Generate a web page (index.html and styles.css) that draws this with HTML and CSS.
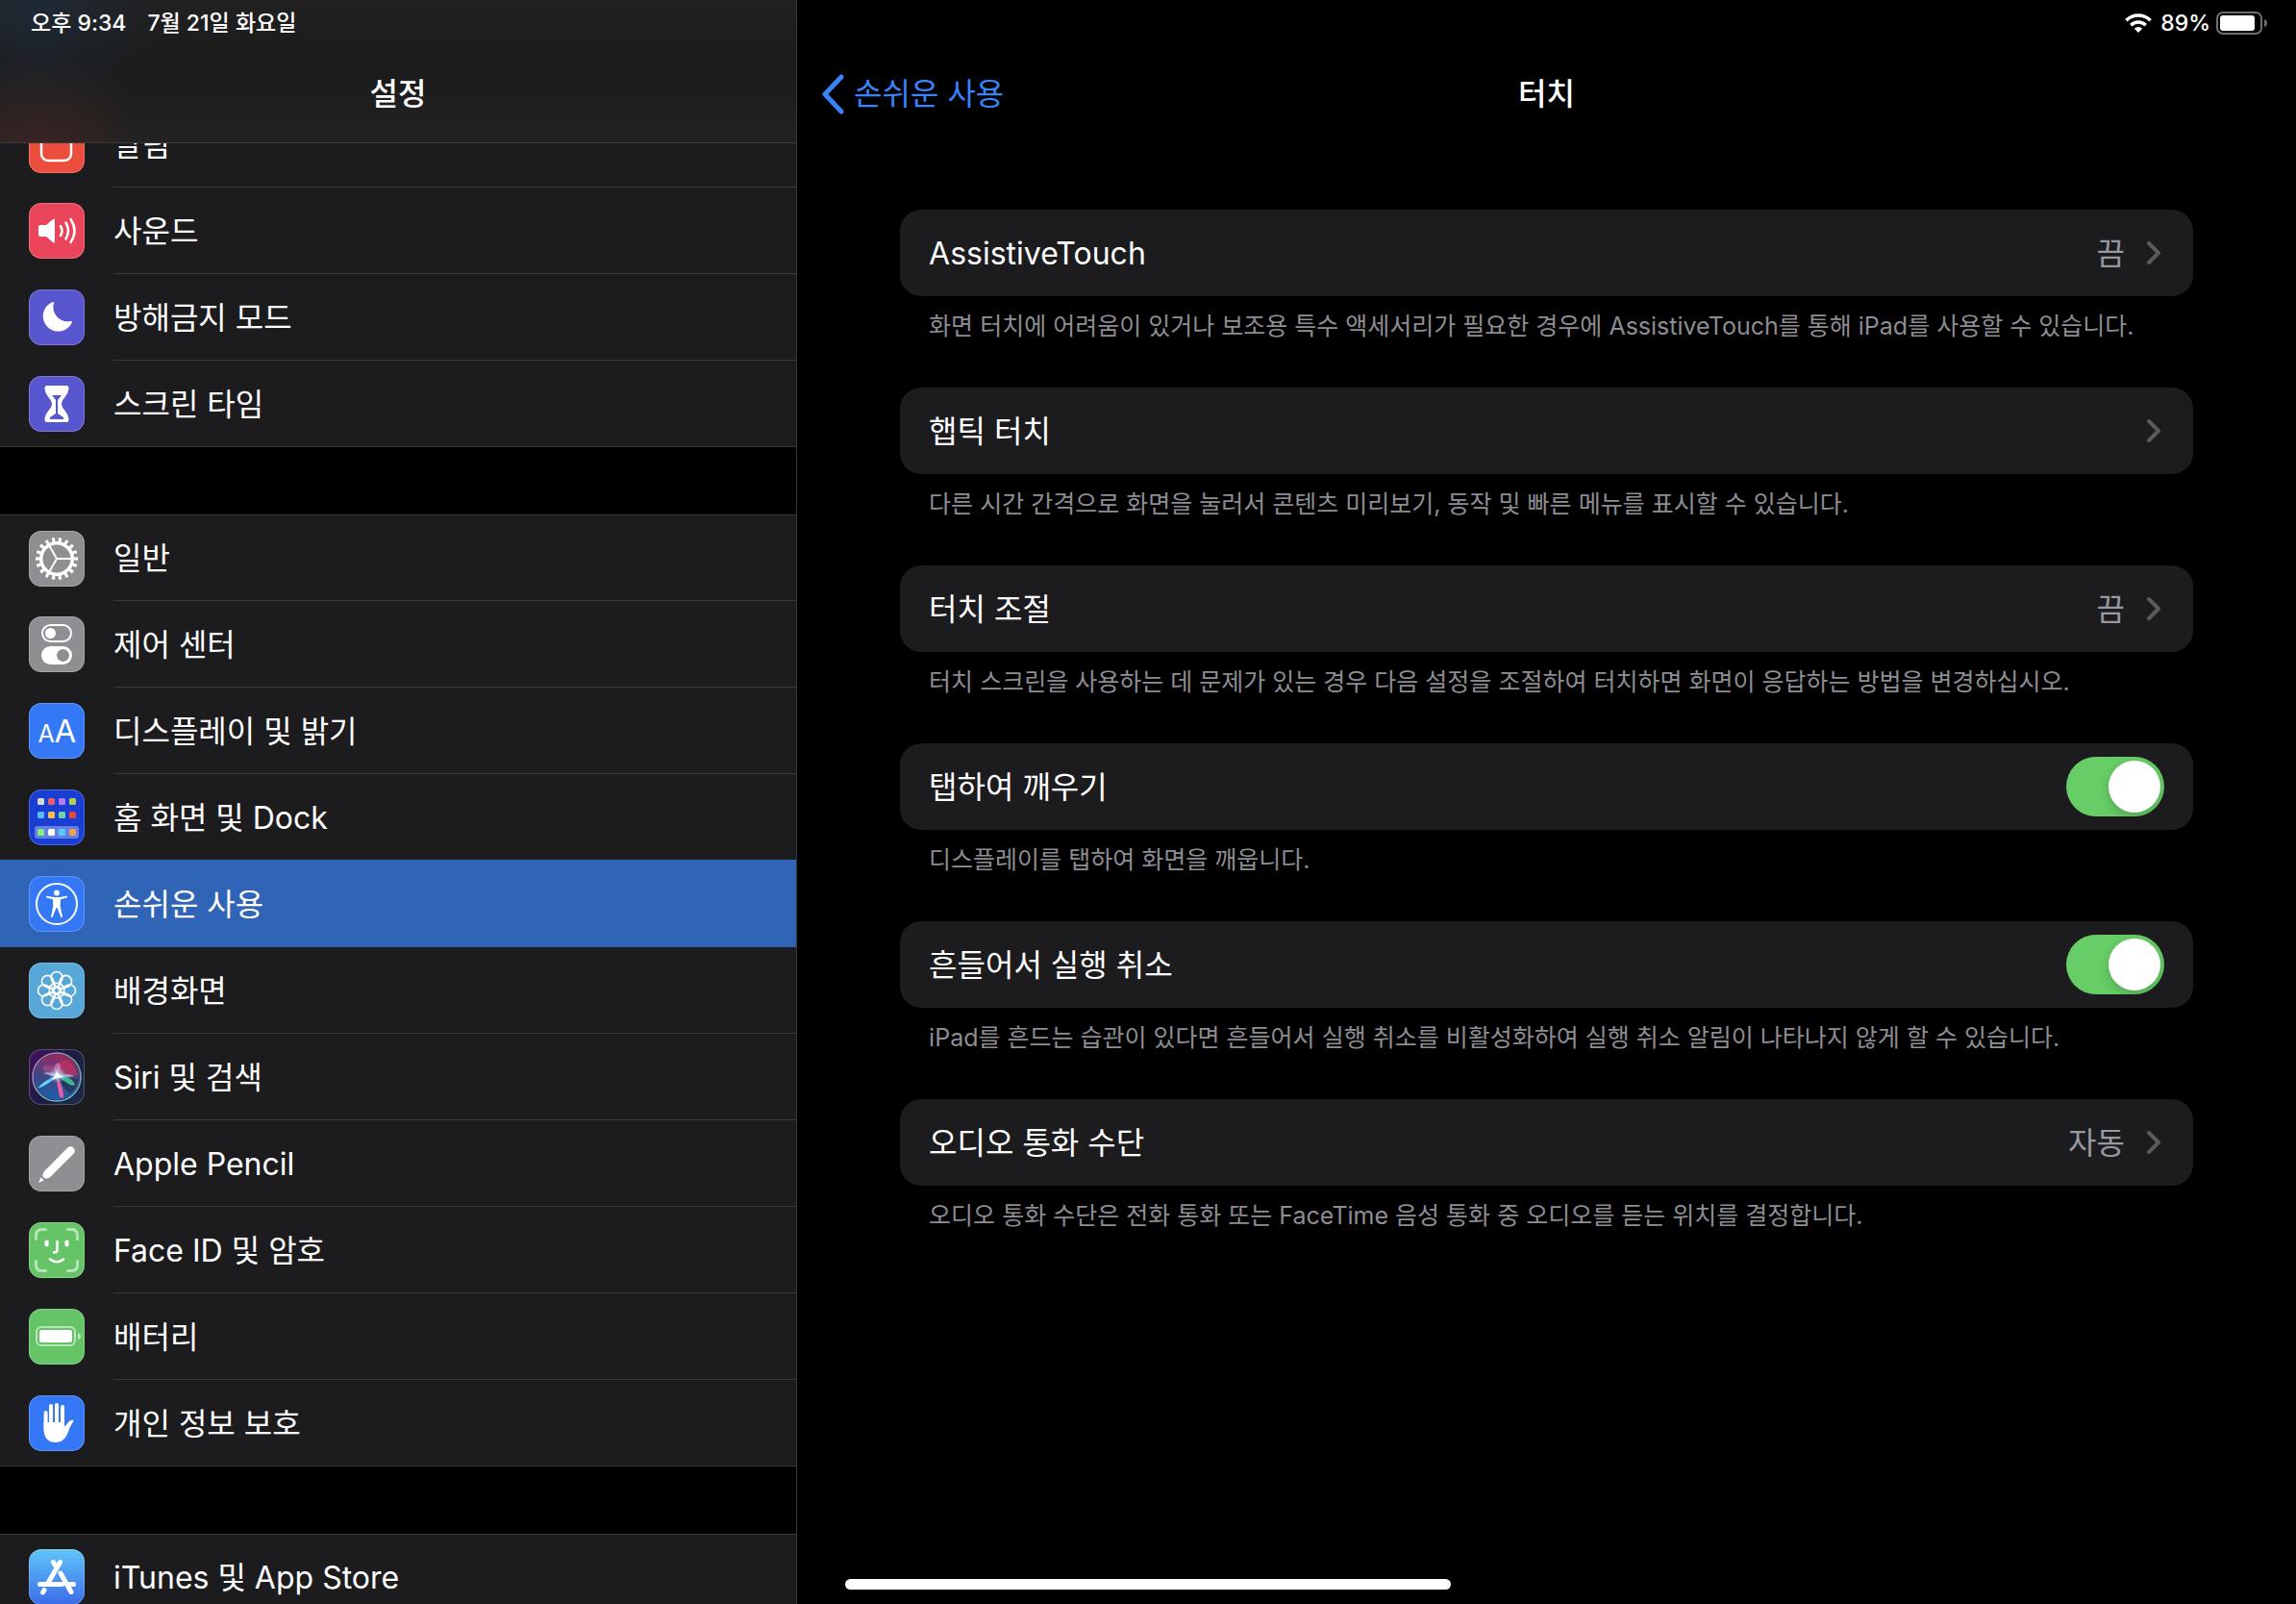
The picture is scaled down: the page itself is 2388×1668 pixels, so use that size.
FILE: index.html
```
<!DOCTYPE html>
<html lang="ko">
<head>
    <meta charset="UTF-8">
    <meta name="viewport" content="width=device-width, initial-scale=1.0">
    <title>설정 - 터치</title>
    <link rel="stylesheet" href="styles.css">
</head>
<body>

    <!-- Status Bar -->
    <div class="status-bar">
        <div class="status-left">
            <span>오후 9:34</span>
            <span>7월 21일 화요일</span>
        </div>
        <div class="status-right">
            <svg class="wifi" viewBox="0 0 28 20" aria-hidden="true">
                <path d="M14 20l-4.2-4.3a6 6 0 0 1 8.400 0z" fill="#fff"/>
                <path d="M6.300 12.200a11 11 0 0 1 15.400 0" fill="none" stroke="#fff" stroke-width="3.400"/>
                <path d="M1.400 7.200a18 18 0 0 1 25.200 0" fill="none" stroke="#fff" stroke-width="3.400"/>
            </svg>
            <span>89%</span>
            <svg class="battery" viewBox="0 0 54 24" aria-hidden="true">
                <rect x="1" y="1" width="46" height="22" rx="6" fill="none" stroke="#6e6e70" stroke-width="2"/>
                <rect x="4" y="4" width="36" height="16" rx="3" fill="#fff"/>
                <path d="M50 8q3 1 3 4t-3 4z" fill="#6e6e70"/>
            </svg>
        </div>
    </div>

    <!-- Sidebar -->
    <nav class="sidebar">
        <header class="sidebar-header">
            <h1>설정</h1>
        </header>

        <ul class="menu menu-first">
            <li><a href="#">
                <svg class="icon bg-red" viewBox="0 0 58 58"><rect x="13" y="14" width="31" height="31" rx="7" fill="none" stroke="#fff" stroke-width="2.500"/></svg>
                <span>알림</span>
            </a></li>
            <li><a href="#">
                <svg class="icon bg-pink" viewBox="0 0 58 58">
                    <path d="M12 23h6l7-6q2-1.500 2 1v22q0 2.500-2 1l-7-6h-6q-2 0-2-2v-8q0-2 2-2z" fill="#fff"/>
                    <path d="M33 24q3 5 0 10M38.500 20.500q5 8.500 0 17M43.500 17q8 12 0 24" fill="none" stroke="#fff" stroke-width="2.500" stroke-linecap="round"/>
                </svg>
                <span>사운드</span>
            </a></li>
            <li><a href="#">
                <svg class="icon bg-purple" viewBox="0 0 58 58"><path d="M25 13q1.500-.5 1 1a15 15 0 0 0 17.500 19q2-.5 1.300 1.500A15.800 15.800 0 1 1 25 13z" fill="#fff"/></svg>
                <span>방해금지 모드</span>
            </a></li>
            <li><a href="#">
                <svg class="icon bg-purple" viewBox="0 0 58 58">
                    <path d="M19 10h20q2.500 0 2.500 2.500C41.500 20 34 24 34 29s7.500 9 7.500 16.500q0 2.500-2.500 2.500H19q-2.500 0-2.500-2.500C16.500 38 24 34 24 29s-7.500-9-7.500-16.500Q16.500 10 19 10z" fill="#fff"/>
                    <path d="M24 20h10l-4 5v14l6 4v2H22v-2l6-4V25z" fill="#5856ce"/>
                </svg>
                <span>스크린 타임</span>
            </a></li>
        </ul>

        <ul class="menu">
            <li><a href="#">
                <svg class="icon bg-gray" viewBox="0 0 58 58" fill="none" stroke="#fff">
                    <circle cx="29" cy="29" r="19.500" stroke-width="5" pathLength="360" stroke-dasharray="9 11" stroke-dashoffset="4.500"/>
                    <circle cx="29" cy="29" r="16.300" stroke-width="3.600"/>
                    <path d="M29 29h16M29 29l-8-14M29 29l-8 14" stroke-width="2"/>
                </svg>
                <span>일반</span>
            </a></li>
            <li><a href="#">
                <svg class="icon bg-gray" viewBox="0 0 58 58">
                    <rect x="14" y="9" width="30" height="17" rx="8.500" fill="none" stroke="#fff" stroke-width="2"/>
                    <circle cx="22.500" cy="17.500" r="5.500" fill="#fff"/>
                    <rect x="13" y="31" width="32" height="19" rx="9.500" fill="#fff"/>
                    <circle cx="35.500" cy="40.500" r="6.500" fill="#8e8e93"/>
                </svg>
                <span>제어 센터</span>
            </a></li>
            <li><a href="#">
                <svg class="icon bg-blue" viewBox="0 0 58 58"><text class="letter-small" x="18" y="41">A</text><text class="letter-big" x="38" y="41">A</text></svg>
                <span>디스플레이 및 밝기</span>
            </a></li>
            <li><a href="#">
                <svg class="icon bg-home" viewBox="0 0 58 58">
                    <rect x="6" y="38" width="46" height="13" rx="3" fill="#6580e4"/>
                    <rect x="9" y="9" width="7" height="7" rx="1.500" fill="#d8d8d0"/>
                    <rect x="20" y="9" width="7" height="7" rx="1.500" fill="#ec5f69"/>
                    <rect x="31" y="9" width="7" height="7" rx="1.500" fill="#b878f2"/>
                    <rect x="42" y="9" width="7" height="7" rx="1.500" fill="#b5cf4f"/>
                    <rect x="9" y="23" width="7" height="7" rx="1.500" fill="#5ab8f8"/>
                    <rect x="20" y="23" width="7" height="7" rx="1.500" fill="#f7c043"/>
                    <rect x="31" y="23" width="7" height="7" rx="1.500" fill="#6fd4a4"/>
                    <rect x="42" y="23" width="7" height="7" rx="1.500" fill="#e8473a"/>
                    <rect x="9" y="41" width="7" height="7" rx="1.500" fill="#84ee80"/>
                    <rect x="20" y="41" width="7" height="7" rx="1.500" fill="#fff"/>
                    <rect x="31" y="41" width="7" height="7" rx="1.500" fill="#5cc8fa"/>
                    <rect x="42" y="41" width="7" height="7" rx="1.500" fill="#f0a050"/>
                </svg>
                <span>홈 화면 및 Dock</span>
            </a></li>
            <li class="selected"><a href="#" aria-current="page">
                <svg class="icon bg-blue" viewBox="0 0 58 58">
                    <circle cx="29" cy="29" r="21" fill="none" stroke="#fff" stroke-width="2"/>
                    <circle cx="29" cy="17.500" r="2.900" fill="#fff"/>
                    <path d="M18.500 20.800l8 1.200h5l8-1.200q1.500.6 0 1.800l-6.500 1.600-.3 7 2.300 11q-.8 1.800-1.900 0L29.500 33h-1l-3.600 9.200q-1.100 1.800-1.900 0l2.300-11-.3-7-6.500-1.600q-1.500-1.200 0-1.800z" fill="#fff"/>
                </svg>
                <span>손쉬운 사용</span>
            </a></li>
            <li><a href="#">
                <svg class="icon bg-sky" viewBox="0 0 58 58" fill="none" stroke="#fff" stroke-width="1.700">
                    <g id="petals">
                        <circle cx="29" cy="15.500" r="6"/>
                        <circle cx="29" cy="42.500" r="6"/>
                        <circle cx="15.500" cy="29" r="6"/>
                        <circle cx="42.500" cy="29" r="6"/>
                        <path d="M24 19l5 7 5-7M24 39l5-7 5 7M19 24l7 5-7 5M39 24l-7 5 7 5"/>
                    </g>
                    <use href="#petals" transform="rotate(45 29 29)"/>
                    <circle cx="29" cy="29" r="3.500"/>
                </svg>
                <span>배경화면</span>
            </a></li>
            <li><a href="#">
                <svg class="icon bg-siri" viewBox="0 0 58 58">
                    <defs>
                        <linearGradient id="siriOrb" x1="0.600" y1="0" x2="0.400" y2="1">
                            <stop offset="0" stop-color="#a02860"/>
                            <stop offset="0.450" stop-color="#4a4080"/>
                            <stop offset="1" stop-color="#1a5fa8"/>
                        </linearGradient>
                        <radialGradient id="siriGlow">
                            <stop offset="0" stop-color="#fff"/>
                            <stop offset="0.400" stop-color="#b8e4ff" stop-opacity="0.600"/>
                            <stop offset="1" stop-color="#9ad0ff" stop-opacity="0"/>
                        </radialGradient>
                        <linearGradient id="siriRing" x1="0" y1="0" x2="1" y2="1">
                            <stop offset="0" stop-color="#b080b8"/>
                            <stop offset="0.600" stop-color="#70b0a0"/>
                            <stop offset="1" stop-color="#70b8e8"/>
                        </linearGradient>
                    </defs>
                    <circle cx="29" cy="29" r="24" fill="url(#siriOrb)"/>
                    <path d="M31 29l20 2q-1 9-8 15-7-4-12-17z" fill="#14344c" opacity="0.700"/>
                    <path d="M29 29Q30 12 15 18q-3 7 14 11z" fill="#c8548c" opacity="0.500"/>
                    <path d="M29 27Q30 8 41 12q8 6 9 14-4 4-21 1z" fill="#d8305c" opacity="0.600"/>
                    <path d="M30 27q14 1 18 9-1 4-7 0-7-4-11-9z" fill="#48d0a0" opacity="0.800"/>
                    <path d="M29 28q-6-12 2-14 5 4-2 14z" fill="#f090d0" opacity="0.600"/>
                    <path d="M28 28Q16 32 9 41q9-3 20-12z" fill="#60d8f8"/>
                    <path d="M29 28q7 11 7 22-3 2-4-1-3-11-3-21z" fill="#ec5ca4"/>
                    <path d="M30 26q-10-3-15-1 8 3 14 4 10 1 19-1-8-3-18-2z" fill="#b8e8ff" opacity="0.600"/>
                    <circle cx="30" cy="27" r="9" fill="url(#siriGlow)"/>
                    <path d="M29 23l2 4 5 2-6 1-6 2 3-4z" fill="#fff"/>
                    <circle cx="29" cy="29" r="25" fill="none" stroke="url(#siriRing)" stroke-width="1.500"/>
                </svg>
                <span>Siri 및 검색</span>
            </a></li>
            <li><a href="#">
                <svg class="icon bg-gray" viewBox="0 0 58 58">
                    <path d="M40.500 12.300a4.500 4.500 0 0 1 6.300 6.300L22 43.200q-2.500 1.500-5 1.200-2.500-1.400-2.700-3.200 0-2 2-4.500z" fill="#fff"/>
                    <path d="M10 49l2.500-5.500q2 1 3 3z" fill="#fff"/>
                </svg>
                <span>Apple Pencil</span>
            </a></li>
            <li><a href="#">
                <svg class="icon bg-green" viewBox="0 0 58 58" fill="none" stroke="#fff" stroke-linecap="round">
                    <path d="M7.500 17.500v-4q0-6 6-6h4M40.500 7.500h4q6 0 6 6v4M50.500 40.500v4q0 6-6 6h-4M17.500 50.500h-4q-6 0-6-6v-4" stroke-width="3" opacity="0.550"/>
                    <path d="M18.500 20.500v3M39.500 20.500v3" stroke-width="4.200"/>
                    <path d="M29.500 20v8.500q0 3-3.500 3M22 38.500q7 5.500 14 0" stroke-width="2.600"/>
                </svg>
                <span>Face ID 및 암호</span>
            </a></li>
            <li><a href="#">
                <svg class="icon bg-green" viewBox="0 0 58 58">
                    <rect x="8" y="19" width="40" height="19" rx="5" fill="none" stroke="#fff" stroke-width="2" opacity="0.550"/>
                    <rect x="11" y="22" width="34" height="13" rx="2.500" fill="#fff"/>
                    <path d="M51 25q3 1 3 3.500T51 32z" fill="#fff" opacity="0.550"/>
                </svg>
                <span>배터리</span>
            </a></li>
            <li><a href="#">
                <svg class="icon bg-blue" viewBox="0 0 58 58">
                    <path d="M17.600 18v18M23 11v20M29 10v20M35 12v20" fill="none" stroke="#fff" stroke-width="4" stroke-linecap="round"/>
                    <path d="M15.600 28H37v4.500q2.500-2 4-4.500 2.500-3 5.500-2-.5 2-2 4-2 3-3.500 8-4 11-12.500 11Q16 49 15.600 36z" fill="#fff"/>
                </svg>
                <span>개인 정보 보호</span>
            </a></li>
        </ul>

        <ul class="menu">
            <li><a href="#">
                <svg class="icon bg-store" viewBox="0 0 58 58" fill="none" stroke="#fff" stroke-width="5" stroke-linecap="round">
                    <path d="M32.500 13.500L19.500 36M11.500 36.500h23M42 36.500h4.500M16 42.500l-1.500 2.300M25.500 13.500l2 3.500M33 25l11 19.500"/>
                </svg>
                <span>iTunes 및 App Store</span>
            </a></li>
        </ul>
    </nav>

    <!-- Detail Pane -->
    <main class="detail">
        <header class="detail-header">
            <a class="back" href="#">
                <svg viewBox="0 0 24 42" aria-hidden="true"><path d="M21 3L4 21l17 18" fill="none" stroke="#3a82f7" stroke-width="5" stroke-linecap="round" stroke-linejoin="round"/></svg>
                <span>손쉬운 사용</span>
            </a>
            <h2>터치</h2>
        </header>

        <div class="settings">
            <section>
                <a class="card" href="#">
                    <span class="name">AssistiveTouch</span>
                    <span class="value">끔</span>
                    <svg class="chevron" viewBox="0 0 14 24"><path d="M2 2l10 10L2 22"/></svg>
                </a>
                <p>화면 터치에 어려움이 있거나 보조용 특수 액세서리가 필요한 경우에 AssistiveTouch를 통해 iPad를 사용할 수 있습니다.</p>
            </section>
            <section>
                <a class="card" href="#">
                    <span class="name">햅틱 터치</span>
                    <svg class="chevron" viewBox="0 0 14 24"><path d="M2 2l10 10L2 22"/></svg>
                </a>
                <p>다른 시간 간격으로 화면을 눌러서 콘텐츠 미리보기, 동작 및 빠른 메뉴를 표시할 수 있습니다.</p>
            </section>
            <section>
                <a class="card" href="#">
                    <span class="name">터치 조절</span>
                    <span class="value">끔</span>
                    <svg class="chevron" viewBox="0 0 14 24"><path d="M2 2l10 10L2 22"/></svg>
                </a>
                <p>터치 스크린을 사용하는 데 문제가 있는 경우 다음 설정을 조절하여 터치하면 화면이 응답하는 방법을 변경하십시오.</p>
            </section>
            <section>
                <div class="card">
                    <label class="name" for="tap-to-wake">탭하여 깨우기</label>
                    <input class="switch" type="checkbox" id="tap-to-wake" checked>
                </div>
                <p>디스플레이를 탭하여 화면을 깨웁니다.</p>
            </section>
            <section>
                <div class="card">
                    <label class="name" for="shake-to-undo">흔들어서 실행 취소</label>
                    <input class="switch" type="checkbox" id="shake-to-undo" checked>
                </div>
                <p>iPad를 흔드는 습관이 있다면 흔들어서 실행 취소를 비활성화하여 실행 취소 알림이 나타나지 않게 할 수 있습니다.</p>
            </section>
            <section>
                <a class="card" href="#">
                    <span class="name">오디오 통화 수단</span>
                    <span class="value">자동</span>
                    <svg class="chevron" viewBox="0 0 14 24"><path d="M2 2l10 10L2 22"/></svg>
                </a>
                <p>오디오 통화 수단은 전화 통화 또는 FaceTime 음성 통화 중 오디오를 듣는 위치를 결정합니다.</p>
            </section>
        </div>
    </main>

    <div class="home-indicator"></div>

</body>
</html>
```
FILE: styles.css
```
* {
    box-sizing: border-box;
}
body {
    font-family: Inter, "Noto Sans CJK KR", sans-serif;
    font-size: 32px;
    line-height: 40px;
    background-color: #000;
    color: #fff;
    margin: 0;
    display: grid;
    grid-template-columns: 34.72% 1fr;
    height: 100vh;
    overflow: hidden;
}
a {
    color: inherit;
    text-decoration: none;
}
h1, h2 {
    margin: 0;
    font-size: 32px;
    font-weight: 500;
}

/* Status bar */
.status-bar {
    position: absolute;
    top: 0;
    left: 0;
    right: 0;
    z-index: 2;
    display: flex;
    justify-content: space-between;
    align-items: center;
    height: 48px;
    padding: 0 29px 0 32px;
    font-size: 23px;
    font-weight: 500;
}
.status-left {
    display: flex;
    gap: 22px;
}
.status-right {
    display: flex;
    align-items: center;
    gap: 6px;
}
.wifi {
    width: 28px;
    height: 20px;
    margin-right: 3px;
}
.battery {
    width: 54px;
    height: 24px;
}

/* Sidebar */
.sidebar {
    border-right: 1px solid #38383a;
    min-width: 0;
    overflow: hidden;
}
.sidebar-header {
    position: relative;
    z-index: 1;
    display: flex;
    justify-content: center;
    height: 149px;
    padding-top: 78px;
    border-bottom: 1px solid #3a3a3c;
    background:
        radial-gradient(circle at 40px 0, rgba(30, 50, 72, 0.5), transparent 130px),
        radial-gradient(circle at 40px 160px, rgba(84, 40, 36, 0.5), transparent 110px),
        linear-gradient(#212121, #1b1b1b 45%, #222);
}
.menu {
    list-style: none;
    margin: 0 0 70px;
    padding: 0;
    background-color: #1c1c1e;
}
.menu-first {
    margin-top: -44px;
}
.menu a {
    display: flex;
    align-items: center;
    gap: 30px;
    height: 90px;
    padding-left: 30px;
}
.menu span {
    flex: 1;
    display: flex;
    align-items: center;
    height: 90px;
    padding-top: 2px;
    border-bottom: 1px solid #3a3a3c;
    white-space: pre;
}
.menu li:first-child a {
    border-top: 1px solid #3a3a3c;
}
.menu li:last-child a {
    border-bottom: 1px solid #3a3a3c;
}
.menu li:first-child span {
    height: 89px;
}
.menu li:last-child span {
    border-bottom: none;
}
.menu .selected {
    position: relative;
    background-color: #2f64b7;
    box-shadow: 0 -1px #2f64b7;
}
.selected span {
    border-bottom-color: transparent;
}
.icon {
    flex: none;
    width: 58px;
    height: 58px;
    border-radius: 13px;
    box-shadow: inset 0 0 0 1px rgba(255, 255, 255, 0.22);
}
.icon text {
    fill: #fff;
    font-weight: 400;
    text-anchor: middle;
}
.letter-small {
    font-size: 25px;
}
.letter-big {
    font-size: 33px;
}
.bg-red { background-color: #eb4e3d; }
.bg-pink { background-color: #ea445a; }
.bg-purple { background-color: #5856ce; }
.bg-gray { background-color: #8e8e93; }
.bg-blue { background-color: #3478f6; }
.bg-home { background-color: #193ed4; }
.bg-sky { background-color: #57a7d8; }
.bg-green { background-color: #65c466; }
.bg-siri { background: linear-gradient(120deg, #451060, #1c1c44 50%, #1c2c48); }
.bg-store { background: linear-gradient(#60c6f8, #3a6be8); }

/* Detail pane */
.detail {
    min-width: 0;
}
.detail-header {
    display: grid;
    grid-template-columns: 1fr auto 1fr;
    padding: 78px 25px 100px;
}
.back {
    display: flex;
    align-items: center;
    gap: 10px;
    color: #3a82f7;
}
.back svg {
    width: 24px;
    height: 42px;
    margin: -1px 0;
}
.settings {
    padding: 0 107px;
}
.card {
    display: flex;
    align-items: center;
    height: 90px;
    padding: 0 30px;
    border-radius: 22px;
    background-color: #1c1c1e;
}
.name {
    flex: 1;
    padding-top: 2px;
}
.value {
    padding-top: 2px;
    color: #98989f;
}
.chevron {
    width: 14px;
    height: 24px;
    margin: 0 4px 0 23px;
    fill: none;
    stroke: #5a5a5e;
    stroke-width: 4;
    stroke-linecap: round;
    stroke-linejoin: round;
}
.switch {
    appearance: none;
    width: 102px;
    height: 62px;
    margin: 0;
    padding: 4px;
    border-radius: 31px;
    background-color: #39393d;
    overflow: hidden;
    cursor: pointer;
}
.switch::before {
    content: "";
    display: block;
    width: 54px;
    height: 54px;
    border-radius: 50%;
    background-color: #fff;
    box-shadow: 0 4px 12px rgba(0, 0, 0, 0.2);
}
.switch:checked {
    background-color: #67ce67;
}
.switch:checked::before {
    margin-left: auto;
}
.settings p {
    margin: 0;
    padding: 13px 30px 46px;
    color: #8d8d93;
    font-size: 25px;
    line-height: 36px;
}

.home-indicator {
    position: fixed;
    left: 50%;
    bottom: 15px;
    width: 630px;
    height: 11px;
    margin-left: -315px;
    border-radius: 6px;
    background-color: #fff;
}
```
